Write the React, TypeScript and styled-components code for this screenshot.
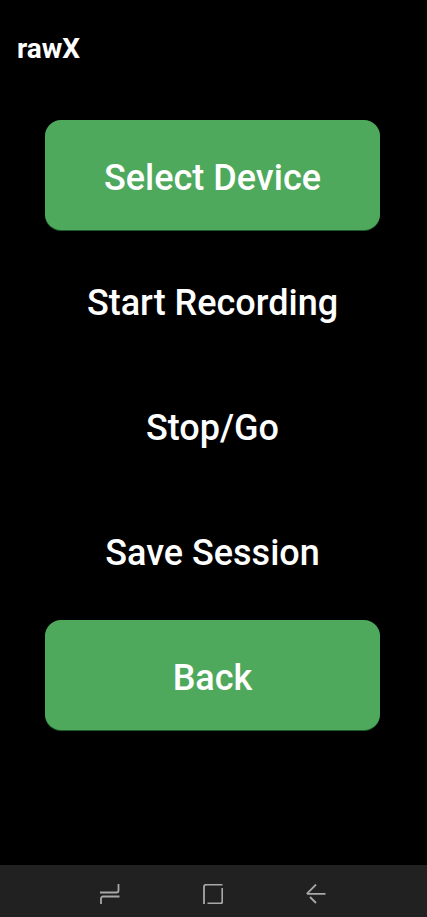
import { createGlobalStyle } from 'styled-components';
import styled from 'styled-components';

const GlobalStyle = createGlobalStyle`
  html, body {
    margin: 0;
    padding: 0;
    background: #000;
  }
`;

const Screen = styled.div`
  width: 427px;
  height: 917px;
  background: #000;
  display: flex;
  flex-direction: column;
  font-family: Roboto, 'Liberation Sans', sans-serif;
  color: #fff;
  overflow: hidden;
`;

const Title = styled.div`
  height: 120px;
  box-sizing: border-box;
  padding: 33px 0 0 17px;
  font-size: 28px;
  line-height: 32px;
  font-weight: 700;
`;

const Menu = styled.div`
  flex: 1;
  padding: 0 47px 0 45px;
  display: flex;
  flex-direction: column;
  gap: 15px;
`;

const MenuButton = styled.div<{ $filled?: boolean }>`
  height: 110px;
  padding-top: 6px;
  box-sizing: border-box;
  display: flex;
  align-items: center;
  justify-content: center;
  border-radius: 16px;
  font-size: 36px;
  font-weight: 500;
  background: ${(p) => (p.$filled ? '#4fa95c' : 'transparent')};
  box-shadow: ${(p) => (p.$filled ? '0 1px 0 #1d5c2a' : 'none')};
`;

const NavBar = styled.div`
  height: 52px;
  box-sizing: border-box;
  padding: 6px 2px 0 0;
  background: #212121;
  display: flex;
  align-items: center;
  justify-content: center;
  gap: 83px;
`;

const NavIcon = styled.svg`
  width: 20px;
  height: 20px;
  fill: none;
  stroke: #a8a8a8;
  stroke-width: 1.8;
`;

export default function App() {
  return (
    <Screen>
      <GlobalStyle />
      <Title>rawX</Title>
      <Menu>
        <MenuButton $filled>Select Device</MenuButton>
        <MenuButton>Start Recording</MenuButton>
        <MenuButton>Stop/Go</MenuButton>
        <MenuButton>Save Session</MenuButton>
        <MenuButton $filled>Back</MenuButton>
      </Menu>
      <NavBar>
        <NavIcon viewBox="0 0 20 20">
          <path d="M0 8.5h16.5a2 2 0 0 0 2-2V0M19.5 12.5H3a2 2 0 0 0-2 2V20" />
        </NavIcon>
        <NavIcon viewBox="0 0 20 20">
          <path d="M1 20V3a2.5 2.5 0 0 1 2.5-2.5H19.5M19.3 4v13.5a2 2 0 0 1-2 2H4.5" />
        </NavIcon>
        <NavIcon viewBox="0 0 20 20">
          <path d="M19.5 9.8H1M10 .5L.8 9.8M4 13l6 6" />
        </NavIcon>
      </NavBar>
    </Screen>
  );
}
